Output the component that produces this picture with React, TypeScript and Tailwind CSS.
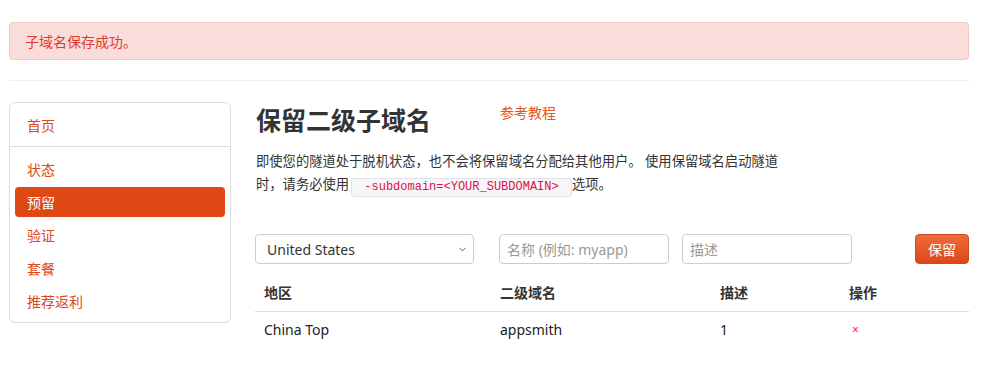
import { ChevronDown } from "lucide-react";

const font = { fontFamily: '"Noto Sans", "Noto Sans CJK SC", sans-serif' };

const navItems = ["状态", "预留", "验证", "套餐", "推荐返利"];

const Sidebar: React.FC = () => {
  return (
    <div className="w-[222px] shrink-0 rounded-[6px] border border-[#dddddd] bg-white">
      <div className="border-b border-[#dddddd] px-[17px] pt-[13px] pb-[10px] text-[14px] leading-[20px] text-[#dd4814]">
        首页
      </div>
      <div className="flex flex-col gap-[3px] px-[5px] pt-[7px] pb-[6px]">
        {navItems.map((item) =>
          item === "预留" ? (
            <div
              key={item}
              className="flex h-[30px] items-center rounded-[4px] bg-[#dd4814] px-[12px] text-[14px] text-white"
            >
              {item}
            </div>
          ) : (
            <div key={item} className="flex h-[30px] items-center px-[12px] text-[14px] text-[#dd4814]">
              {item}
            </div>
          )
        )}
      </div>
    </div>
  );
};

const App: React.FC = () => {
  return (
    <div className="min-h-[370px] bg-white pl-[9px] pr-[29px] text-[#333333]" style={font}>
      <div className="h-[22px]" />
      <div className="flex h-[38px] items-center rounded-[4px] border border-[#f5c6c4] bg-[#f9dddb] px-[15px] text-[14px] text-[#df382c]">
        子域名保存成功。
      </div>
      <div className="mt-[20px] h-px bg-[#eeeeee]" />

      <div className="mt-[21px] flex items-start">
        <Sidebar />

        <div className="ml-[24px] flex-1">
          <div className="flex items-start">
            <h1 className="w-[245px] pl-px text-[25px] font-bold leading-[36px] text-[#333333]">保留二级子域名</h1>
            <a className="mt-px text-[14px] leading-[20px] text-[#e95420]">参考教程</a>
          </div>

          <p className="mt-[12px] w-[532px] pl-px text-[13.3px] leading-[23px] text-[#333333]">
            即使您的隧道处于脱机状态，也不会将保留域名分配给其他用户。 使用保留域名启动隧道时，请务必使用
            <code
              className="ml-[2px] inline-block whitespace-pre rounded-[3px] border border-[#e1e1e8] bg-[#f7f7f9] px-[5px] align-[-1px] text-[12px] leading-[17px] text-[#dd1144]"
              style={{ fontFamily: '"Liberation Mono", monospace' }}
            >
              {" -subdomain=<YOUR_SUBDOMAIN> "}
            </code>
            选项。
          </p>

          <div className="mt-[37px] flex items-center">
            <div className="relative w-[219px]">
              <select
                className="h-[30px] w-full appearance-none rounded-[4px] border border-[#cccccc] bg-white pl-[11px] text-[14px] text-[#333333] outline-none"
                defaultValue="us"
              >
                <option value="us">United States</option>
              </select>
              <ChevronDown
                size={11}
                strokeWidth={2}
                className="pointer-events-none absolute right-[6px] top-[10px] text-[#555555]"
              />
            </div>
            <input
              className="ml-[25px] h-[30px] w-[170px] rounded-[4px] border border-[#cccccc] px-[7px] text-[14px] outline-none placeholder:text-[#999999]"
              placeholder="名称 (例如: myapp)"
            />
            <input
              className="ml-[13px] h-[30px] w-[170px] rounded-[4px] border border-[#cccccc] px-[7px] text-[14px] outline-none placeholder:text-[#999999]"
              placeholder="描述"
            />
            <div className="flex-1" />
            <button className="h-[30px] w-[54px] rounded-[4px] border border-[#d2461a] bg-gradient-to-b from-[#ec6b3a] to-[#dd4814] text-[14px] text-white">
              保留
            </button>
          </div>

          <div className="mt-[11px] text-[14px]">
            <div className="grid grid-cols-[236px_220px_129px_1fr] border-b border-[#dddddd] font-bold leading-[20px]">
              <div className="px-[9px] py-[8px]">地区</div>
              <div className="px-[9px] py-[8px]">二级域名</div>
              <div className="px-[9px] py-[8px]">描述</div>
              <div className="px-[9px] py-[8px]">操作</div>
            </div>
            <div className="grid grid-cols-[236px_220px_129px_1fr] leading-[20px]">
              <div className="px-[9px] py-[8px] text-[#222222]">China Top</div>
              <div className="px-[9px] py-[8px] text-[#222222]">appsmith</div>
              <div className="px-[9px] py-[8px] text-[#222222]">1</div>
              <div className="px-[12px] py-[8px] text-[12px] text-[#df382c]">×</div>
            </div>
          </div>
        </div>
      </div>
    </div>
  );
};

export default App;
